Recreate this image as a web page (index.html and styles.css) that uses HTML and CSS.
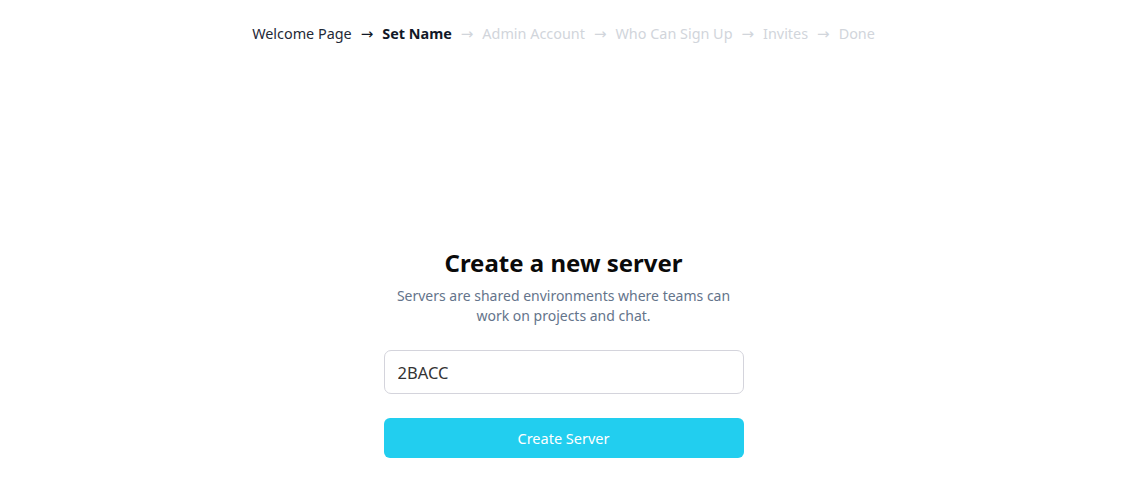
FILE: index.html
```html
<!DOCTYPE html>
<html lang="en">
<head>
<meta charset="utf-8">
<title>Create a new server</title>
<link rel="stylesheet" href="styles.css">
</head>
<body>
<div class="page">
  <nav class="steps">
    <span class="step done">Welcome Page</span>
    <span class="arrow dark">→</span>
    <span class="step current">Set Name</span>
    <span class="arrow">→</span>
    <span class="step todo">Admin Account</span>
    <span class="arrow">→</span>
    <span class="step todo">Who Can Sign Up</span>
    <span class="arrow">→</span>
    <span class="step todo">Invites</span>
    <span class="arrow">→</span>
    <span class="step todo">Done</span>
  </nav>
  <main class="card">
    <h1 class="title">Create a new server</h1>
    <p class="subtitle">Servers are shared environments where teams can work on projects and chat.</p>
    <input class="name-input" type="text" value="2BACC">
    <button class="create-btn" type="button">Create Server</button>
  </main>
</div>
</body>
</html>
```

FILE: styles.css
```css
html, body {
  margin: 0;
  padding: 0;
  background: #ffffff;
}
body {
  font-family: "Noto Sans", "Open Sans", sans-serif;
}
.page {
  display: flex;
  flex-direction: column;
  align-items: center;
  padding-top: 23px;
}
.steps {
  display: flex;
  align-items: center;
  gap: 9px;
  font-size: 14.4px;
  line-height: 22px;
  color: #d1d5db;
}
.step.done { color: #1f2937; }
.step.current { color: #111827; font-weight: 700; }
.step.todo { color: #d1d5db; }
.arrow {
  font-family: "DejaVu Sans", sans-serif;
  font-size: 15px;
  color: #d1d5db;
}
.arrow.dark { color: #111827; }
.card {
  margin-top: 201px;
  width: 360px;
  display: flex;
  flex-direction: column;
  align-items: stretch;
  text-align: center;
}
.title {
  margin: 0;
  font-size: 24px;
  line-height: 34px;
  font-weight: 700;
  color: #0a0a0a;
}
.subtitle {
  margin: 6px 0 0;
  font-size: 14px;
  line-height: 20px;
  color: #64748b;
}
.name-input {
  margin-top: 24px;
  box-sizing: border-box;
  height: 44px;
  width: 100%;
  padding: 0 13px;
  border: 1px solid #d4d4dc;
  border-radius: 7px;
  font-family: inherit;
  font-size: 16.5px;
  color: #333333;
  background: #ffffff;
  outline: none;
}
.create-btn {
  margin-top: 24px;
  height: 40px;
  width: 100%;
  border: none;
  border-radius: 6px;
  background: #22ceef;
  color: #ffffff;
  font-family: inherit;
  font-size: 14.5px;
}
```
